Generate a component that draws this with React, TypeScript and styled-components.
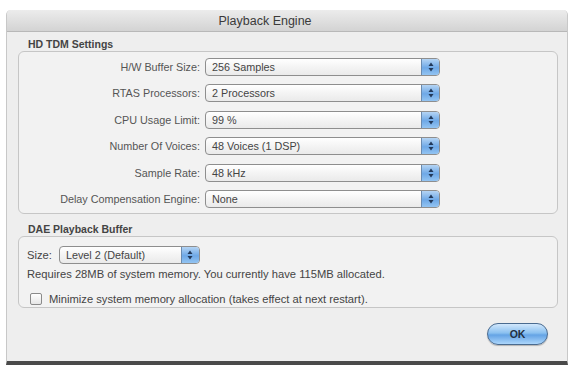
import styled, { createGlobalStyle } from 'styled-components';

const GlobalStyle = createGlobalStyle`
  html, body {
    margin: 0;
    padding: 0;
    background: #ffffff;
  }
  body {
    font-family: 'Liberation Sans', Arial, sans-serif;
    color: #2a2a2a;
  }
`;

type Row = {
  label: string;
  value: string;
};

/**
 * Settings shown in the HD TDM group, top to bottom.
 */
const rows: Row[] = [
  { label: 'H/W Buffer Size:', value: '256 Samples' },
  { label: 'RTAS Processors:', value: '2 Processors' },
  { label: 'CPU Usage Limit:', value: '99 %' },
  { label: 'Number Of Voices:', value: '48 Voices (1 DSP)' },
  { label: 'Sample Rate:', value: '48 kHz' },
  { label: 'Delay Compensation Engine:', value: 'None' },
];

const Window = styled.div`
  margin: 10px 0 0 6px;
  width: 562px;
  height: 355px;
  box-sizing: border-box;
  display: flex;
  flex-direction: column;
  background: #eeeeee;
  border: 1px solid #c8c8c8;
  border-top: none;
  border-bottom: 4px solid #4a4a4a;
  border-radius: 5px 5px 0 0;
  overflow: hidden;
`;

const TitleBar = styled.div`
  height: 21px;
  flex: none;
  display: flex;
  align-items: center;
  justify-content: center;
  padding-right: 44px;
  background: linear-gradient(#ececec, #d3d3d3);
  border-bottom: 1px solid #b8b8b8;
  font-size: 12.5px;
  color: #3a3a3a;
`;

const Body = styled.div`
  flex: 1;
  display: flex;
  flex-direction: column;
  padding: 5px 9px 0 11px;
`;

const GroupTitle = styled.div<{ $top?: number }>`
  font-size: 10.5px;
  font-weight: bold;
  color: #444;
  padding-left: 10px;
  margin-top: ${({ $top }) => $top ?? 0}px;
  height: 14px;
  line-height: 14px;
`;

const GroupBox = styled.div<{ $height: number }>`
  height: ${({ $height }) => $height}px;
  box-sizing: border-box;
  border: 1px solid #c6c6c6;
  border-radius: 6px;
  background: #f2f2f2;
`;

const SettingsGrid = styled.div`
  display: grid;
  grid-template-columns: 181px 235px;
  grid-auto-rows: 18px;
  column-gap: 5px;
  row-gap: 8.4px;
  padding-top: 6px;
`;

const Label = styled.div`
  font-size: 10.8px;
  color: #555;
  text-align: right;
  line-height: 18px;
  white-space: nowrap;
`;

const Popup = styled.div<{ $width?: number }>`
  width: ${({ $width }) => ($width ? `${$width}px` : 'auto')};
  height: 18px;
  box-sizing: border-box;
  display: flex;
  border: 1px solid #8e8e8e;
  border-radius: 4px;
  background: linear-gradient(#ffffff, #f4f4f4 50%, #eaeaea);
  overflow: hidden;
`;

const PopupText = styled.span`
  flex: 1;
  font-size: 10.8px;
  line-height: 16px;
  padding-left: 6px;
  color: #444;
  white-space: nowrap;
`;

const Stepper = styled.span`
  width: 17px;
  flex: none;
  display: flex;
  align-items: center;
  justify-content: center;
  background: linear-gradient(#b4d4f4, #6ea8e6 55%, #93c4f2);
  border-left: 1px solid #6a8bb0;
`;

function Arrows(): JSX.Element {
  return (
    <svg width="6" height="10" viewBox="0 0 6 10">
      <path d="M3 0.5 L5.5 4 H0.5 Z" fill="#22395a" />
      <path d="M3 9.5 L5.5 6 H0.5 Z" fill="#22395a" />
    </svg>
  );
}

function PopupButton({ value, width }: { value: string; width?: number }): JSX.Element {
  return (
    <Popup $width={width}>
      <PopupText>{value}</PopupText>
      <Stepper>
        <Arrows />
      </Stepper>
    </Popup>
  );
}

const BufferInner = styled.div`
  display: flex;
  flex-direction: column;
  padding: 8px 0 0 8px;
`;

const SizeRow = styled.div`
  display: flex;
  align-items: center;
  gap: 7px;
  height: 19px;
`;

const Text = styled.div`
  font-size: 11.2px;
  color: #444;
  white-space: nowrap;
`;

const Note = styled(Text)`
  margin-top: 3px;
  height: 14px;
  line-height: 14px;
`;

const CheckRow = styled.label`
  display: flex;
  align-items: center;
  gap: 7px;
  margin-top: 12px;
  padding-left: 3px;
`;

const CheckBox = styled.span`
  width: 12px;
  height: 12px;
  box-sizing: border-box;
  border: 1px solid #8a8a8a;
  border-radius: 2px;
  background: linear-gradient(#ffffff, #e6e6e6);
`;

const Footer = styled.div`
  display: flex;
  justify-content: flex-end;
  padding: 15px 10px 0 0;
`;

const OkButton = styled.button`
  width: 61px;
  height: 22px;
  border: 1px solid #4a6b90;
  border-radius: 11px;
  background: linear-gradient(#d2e8fc, #8ac0f0 45%, #64a3e5 55%, #acd6fb);
  box-shadow: 0 1px 1px rgba(0, 0, 0, 0.25);
  font-family: 'Liberation Sans', Arial, sans-serif;
  font-size: 10.5px;
  font-weight: bold;
  color: #223040;
  padding: 0;
`;

export default function App(): JSX.Element {
  return (
    <>
      <GlobalStyle />
      <Window>
        <TitleBar>Playback Engine</TitleBar>
        <Body>
          <GroupTitle>HD TDM Settings</GroupTitle>
          <GroupBox $height={163}>
            <SettingsGrid>
              {rows.map(row => (
                <>
                  <Label key={`l-${row.label}`}>{row.label}</Label>
                  <PopupButton key={`p-${row.label}`} value={row.value} />
                </>
              ))}
            </SettingsGrid>
          </GroupBox>
          <GroupTitle $top={8}>DAE Playback Buffer</GroupTitle>
          <GroupBox $height={72}>
            <BufferInner>
              <SizeRow>
                <Text>Size:</Text>
                <PopupButton value="Level 2 (Default)" width={141} />
              </SizeRow>
              <Note>Requires 28MB of system memory. You currently have 115MB allocated.</Note>
              <CheckRow>
                <CheckBox />
                <Text>Minimize system memory allocation (takes effect at next restart).</Text>
              </CheckRow>
            </BufferInner>
          </GroupBox>
          <Footer>
            <OkButton>OK</OkButton>
          </Footer>
        </Body>
      </Window>
    </>
  );
}
